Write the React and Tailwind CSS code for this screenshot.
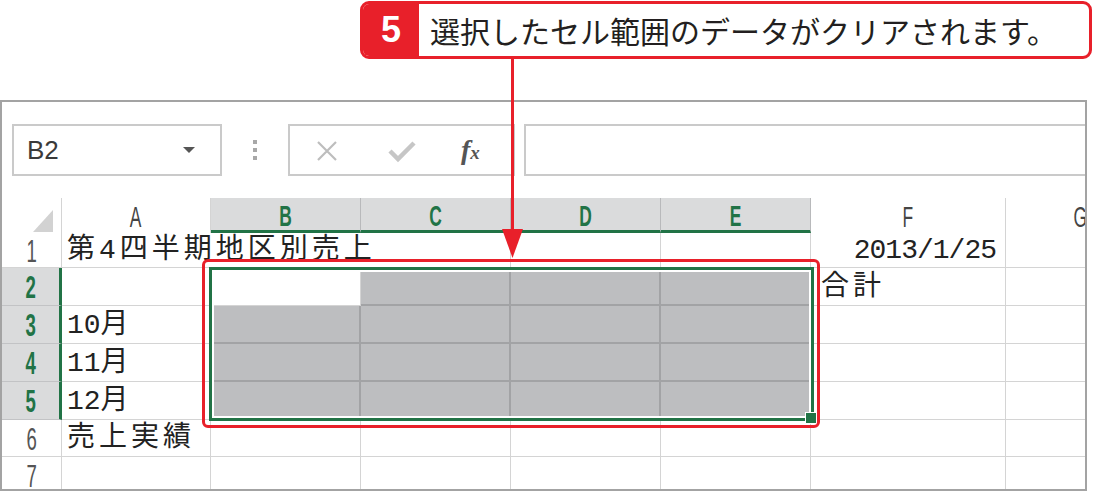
const cols = [
  { key: 'A', w: 'w-[149px]', sel: false },
  { key: 'B', w: 'w-[150px]', sel: true },
  { key: 'C', w: 'w-[150px]', sel: true },
  { key: 'D', w: 'w-[150px]', sel: true },
  { key: 'E', w: 'w-[150px]', sel: true },
  { key: 'F', w: 'w-[195px]', sel: false },
  { key: 'G', w: 'w-[150px]', sel: false },
];

const rows = [
  { n: 1, h: 'h-[35px]', sel: false },
  { n: 2, h: 'h-[38px]', sel: true },
  { n: 3, h: 'h-[38px]', sel: true },
  { n: 4, h: 'h-[38px]', sel: true },
  { n: 5, h: 'h-[38px]', sel: true },
  { n: 6, h: 'h-[37px]', sel: false },
  { n: 7, h: 'h-[37px]', sel: false },
];

const cellText = {
  '1A': <span className="tracking-[4px]">第4四半期地区別売上</span>,
  '1F': <span className="tracking-[-1px]">2013/1/25</span>,
  '2F': <span className="tracking-[4px]">合計</span>,
  '3A': <span>10<span className="tracking-[4px]">月</span></span>,
  '4A': <span>11<span className="tracking-[4px]">月</span></span>,
  '5A': <span>12<span className="tracking-[4px]">月</span></span>,
  '6A': <span className="tracking-[4px]">売上実績</span>,
};

function Cell({ row, col }) {
  const id = `${row.n}${col.key}`;
  const inSel = row.sel && col.sel;
  const active = id === '2B';
  const gray = inSel && !active;
  const spill = id === '1A' || id === '1B';
  const right = col.key === 'F' && row.n === 1;
  return (
    <div
      className={`${col.w} shrink-0 flex items-center whitespace-nowrap overflow-visible ${
        gray ? 'border-b-[2px] border-r-[2px] bg-[#bdbec0] border-[#a2a3a5]' : 'border-b border-[#d4d4d4]'
      } ${spill || gray ? '' : 'border-r'} ${
        right ? 'justify-end pr-[9px]' : col.key === 'F' ? 'pl-[10px]' : 'pl-[5px]'
      } pt-[2px]`}
    >
      {cellText[id]}
    </div>
  );
}

function App() {
  return (
    <div className="relative w-[1093px] h-[491px] overflow-hidden bg-white font-['Noto_Sans_CJK_JP',sans-serif]">
      {/* Callout */}
      <div className="h-[100px] pt-[1px] pl-[360px]">
        <div className="flex h-[58px] w-[732px] rounded-[9px] border-[3px] border-[#e8202a] overflow-hidden">
          <div className="w-[56px] shrink-0 bg-[#e8202a] flex items-center justify-center text-white text-[36px] font-bold font-['Liberation_Sans',sans-serif] leading-none">
            5
          </div>
          <div className="flex-1 flex items-center pl-[11px] text-[30px] font-normal text-[#231f20] leading-none whitespace-nowrap">
            選択したセル範囲のデータがクリアされます。
          </div>
        </div>
      </div>

      {/* Excel window */}
      <div className="w-[1087px] h-[391px] border-2 border-[#a3a3a3] overflow-hidden">
        {/* Formula bar */}
        <div className="flex h-[96px] items-center pl-[10px]">
          <div className="w-[210px] h-[52px] shrink-0 border-2 border-[#cacaca] flex items-center justify-between pl-[13px] pr-[25px]">
            <span className="font-['Liberation_Sans',sans-serif] text-[26px] text-[#3a3a3a] leading-none">B2</span>
            <svg width="12" height="6" viewBox="0 0 12 6">
              <polygon points="0,0 12,0 6,6" fill="#555" />
            </svg>
          </div>
          <div className="w-[66px] shrink-0 flex flex-col items-center gap-[4px]">
            <span className="w-[4px] h-[4px] bg-[#a8a8a8]" />
            <span className="w-[4px] h-[4px] bg-[#a8a8a8]" />
            <span className="w-[4px] h-[4px] bg-[#a8a8a8]" />
          </div>
          <div className="w-[227px] h-[52px] shrink-0 border-2 border-[#cacaca] flex items-center pl-[26px]">
            <svg width="22" height="22" viewBox="0 0 22 22" className="mt-[2px]">
              <path d="M2 2 L20 20 M20 2 L2 20" stroke="#bdbdbd" strokeWidth="2.2" />
            </svg>
            <svg width="28" height="24" viewBox="0 0 28 24" className="ml-[50px] mt-[4px]">
              <path d="M2 11 L10 19 L26 3" stroke="#c6c6c6" strokeWidth="4.5" fill="none" />
            </svg>
            <span className="ml-[45px] font-['Liberation_Serif',serif] italic font-bold text-[28px] text-[#555] leading-none">
              f<span className="text-[19px]">x</span>
            </span>
          </div>
          <div className="ml-[9px] mr-[-4px] flex-1 h-[52px] border-2 border-[#cacaca]" />
        </div>

        {/* Column headers */}
        <div className="flex h-[35px] font-['Liberation_Sans',sans-serif] text-[29px] leading-none">
          <div className="w-[60px] shrink-0 border-r border-[#d4d4d4] flex items-end justify-end pr-[8px] pb-[1px]">
            <svg width="20" height="22" viewBox="0 0 20 22">
              <polygon points="20,0 20,22 0,22" fill="#d2d2d2" />
            </svg>
          </div>
          {cols.map((c) => (
            <div
              key={c.key}
              className={`${c.w} shrink-0 flex justify-center items-center pt-[4px] ${
                c.sel
                  ? 'bg-[#dadbdc] border-r border-r-[#b8b9bb] border-b-[3px] border-b-[#217346] text-[#217346] font-bold'
                  : 'border-r border-[#d4d4d4] text-[#444]'
              }`}
            >
              <span className="inline-block scale-x-[0.6]">{c.key}</span>
            </div>
          ))}
        </div>

        {/* Rows */}
        <div className="font-['Liberation_Mono','Noto_Sans_CJK_JP',monospace] text-[28px] text-[#222] leading-none">
          {rows.map((r) => (
            <div key={r.n} className={`flex ${r.h}`}>
              <div
                className={`w-[60px] shrink-0 flex items-center justify-center pt-[2px] font-['Liberation_Sans',sans-serif] text-[31px] ${
                  r.sel
                    ? 'bg-[#dadbdc] border-r-[3px] border-r-[#217346] border-b border-b-[#c2c3c5] text-[#217346] font-bold'
                    : 'border-r border-b border-[#d4d4d4] text-[#555]'
                }`}
              >
                <span className="inline-block scale-x-[0.6]">{r.n}</span>
              </div>
              {cols.map((c) => (
                <Cell key={c.key} row={r} col={c} />
              ))}
            </div>
          ))}
        </div>
      </div>

      {/* Selection frame */}
      <div className="absolute left-[209px] top-[267px] w-[605px] h-[154px] border-[3px] border-[#217346] shadow-[inset_0_0_0_2px_#ffffff]" />
      <div className="absolute left-[805px] top-[412px] w-[12px] h-[12px] bg-[#217346] border border-white" />

      {/* Red highlight */}
      <div className="absolute left-[202px] top-[259px] w-[618px] h-[169px] border-[3px] border-[#e8202a] rounded-[6px]" />

      {/* Leader line */}
      <div className="absolute left-[511px] top-[58px] w-[3px] h-[174px] bg-[#e8202a]" />
      <svg className="absolute left-[502px] top-[229px]" width="21" height="29" viewBox="0 0 21 29">
        <polygon points="0,0 21,0 10.5,29" fill="#e8202a" />
      </svg>
    </div>
  );
}

export default App;
